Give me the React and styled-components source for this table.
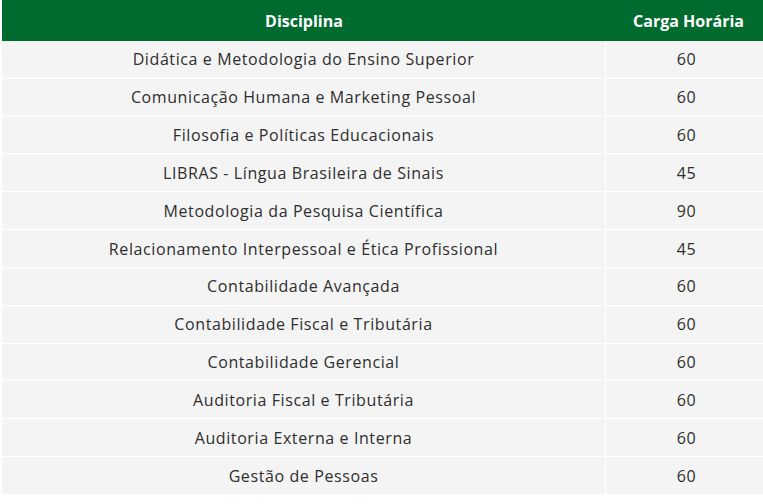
import React from 'react';
import styled, { createGlobalStyle } from 'styled-components';

const GlobalStyle = createGlobalStyle`
    body {
        margin: 0;
        background: #ffffff;
        font-family: "Open Sans", "Liberation Sans", sans-serif;
    }
`;

const Wrapper = styled.div`
    padding: 0 0 0 2px;
`;

const Table = styled.div`
    display: grid;
    grid-template-columns: 604px 1fr;
`;

const HeadCell = styled.div`
    height: 41px;
    display: flex;
    align-items: center;
    justify-content: center;
    background-color: #006b2f;
    color: #ffffff;
    font-size: 16px;
    font-weight: 700;
    padding-left: ${props => props.shift || 0}px;
`;

const Cell = styled.div`
    height: 36.83px;
    display: flex;
    align-items: center;
    justify-content: center;
    background-color: #f4f4f4;
    color: #2e2e2e;
    font-size: 16px;
    letter-spacing: 0.6px;
    border-bottom: 1px solid #ffffff;
    border-right: ${props => props.first ? '1px solid #ffffff' : 'none'};
    padding-left: ${props => props.shift || 0}px;
`;

const disciplinas = [
    ['Didática e Metodologia do Ensino Superior', 60],
    ['Comunicação Humana e Marketing Pessoal', 60],
    ['Filosofia e Políticas Educacionais', 60],
    ['LIBRAS - Língua Brasileira de Sinais', 45],
    ['Metodologia da Pesquisa Científica', 90],
    ['Relacionamento Interpessoal e Ética Profissional', 45],
    ['Contabilidade Avançada', 60],
    ['Contabilidade Fiscal e Tributária', 60],
    ['Contabilidade Gerencial', 60],
    ['Auditoria Fiscal e Tributária', 60],
    ['Auditoria Externa e Interna', 60],
    ['Gestão de Pessoas', 60],
];

const App = () => {
    return (
        <Wrapper>
            <GlobalStyle />
            <Table>
                <HeadCell>Disciplina</HeadCell>
                <HeadCell shift={8}>Carga Horária</HeadCell>
                {disciplinas.map(([nome, horas]) => (
                    <React.Fragment key={nome}>
                        <Cell first>{nome}</Cell>
                        <Cell shift={4}>{horas}</Cell>
                    </React.Fragment>
                ))}
            </Table>
        </Wrapper>
    );
};

export default App;
